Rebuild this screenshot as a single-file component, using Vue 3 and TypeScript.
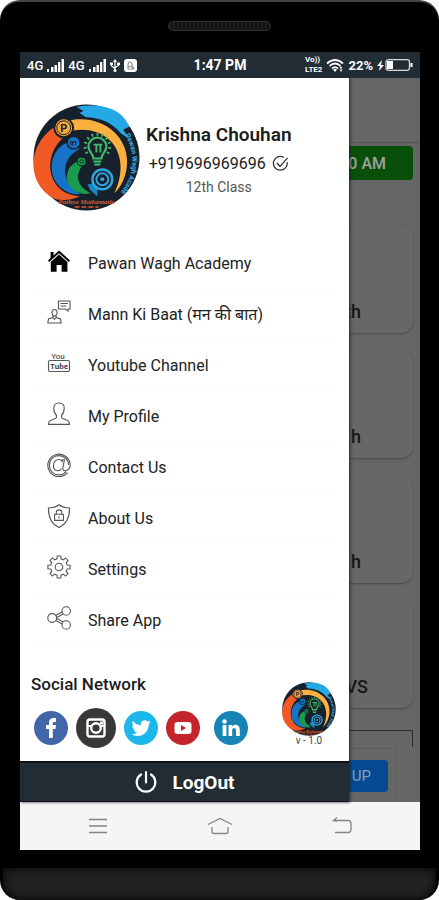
<script setup lang="ts">
interface MenuEntry {
  label: string
  icon: string
  paths: string[]
  solid?: boolean
}

interface PageCard {
  text: string
  wide?: boolean
}

const polar = (r: number, deg: number): string => {
  const a = (deg * Math.PI) / 180
  return `${(12 + r * Math.cos(a)).toFixed(2)} ${(12 + r * Math.sin(a)).toFixed(2)}`
}

const gearPath = (): string => {
  const points: string[] = []
  for (let i = 0; i < 8; i++) {
    const c = i * 45
    points.push(polar(8.4, c - 14), polar(11.2, c - 9), polar(11.2, c + 9), polar(8.4, c + 14))
  }
  return `M${points.join('L')}Z`
}

const raysPath = (): string => {
  const parts: string[] = []
  for (let i = 0; i < 11; i++) {
    const a = ((150 + i * 24) * Math.PI) / 180
    const x = Math.cos(a)
    const y = Math.sin(a)
    parts.push(
      `M${(65 + 11 * x).toFixed(1)} ${(43 + 11 * y).toFixed(1)}L${(65 + 14 * x).toFixed(1)} ${(43 + 14 * y).toFixed(1)}`,
    )
  }
  return parts.join('')
}

const rays = raysPath()

const menu: MenuEntry[] = [
  {
    label: 'Pawan Wagh Academy',
    icon: 'home',
    solid: true,
    paths: [
      'M12 1.5 L23 11.4 L21.8 12.9 L12 4.2 L2.2 12.9 L1 11.4 L3.6 9 V3 H6.6 V6.4 Z',
      'M12 5.6 L20.4 13 V22.8 H14.6 V16 H9.6 V22.8 H3.8 V13 Z',
    ],
  },
  {
    label: 'Mann Ki Baat (मन की बात)',
    icon: 'talk',
    paths: [
      'M11.5 1 H23 V9 H21 V11 L18 9 H11.5 Z',
      'M13.5 3.5 H21 M13.5 6 H19.5',
      'M7.5 9.5 C4.6 9.5 4.6 13 5.4 14.6 C6.2 16.6 8.8 16.6 9.6 14.6 C10.4 13 10.4 9.5 7.5 9.5 Z',
      'M5.8 16 V17.5 L1.5 19 L.8 23 H14.2 L13.5 19 L9.2 17.5 V16',
      'M5.8 17.5 L7.5 19.5 L9.2 17.5',
    ],
  },
  {
    label: 'Youtube Channel',
    icon: 'youtube',
    paths: ['M3 9.5 H21 Q22.5 9.5 22.5 11 V19 Q22.5 20.5 21 20.5 H3 Q1.5 20.5 1.5 19 V11 Q1.5 9.5 3 9.5 Z'],
  },
  {
    label: 'My Profile',
    icon: 'profile',
    paths: [
      'M12 1 C8.2 1 6.6 3.2 6.8 6.4 C6.9 9.4 7.8 11.8 9.4 13.2 V15.6 C8.8 17.4 3 17.4 1.8 20.4 L1.6 22.4 H22.4 L22.2 20.4 C21 17.4 15.2 17.4 14.6 15.6 V13.2 C16.2 11.8 17.1 9.4 17.2 6.4 C17.4 3.2 15.8 1 12 1 Z',
    ],
  },
  {
    label: 'Contact Us',
    icon: 'at',
    paths: [
      'M20.6 19.6 A11.2 11.2 0 1 1 23.2 12 C23.2 15.5 20.9 17.8 18.5 17.8 C16.4 17.8 15.5 16.4 16 14.2 L17.4 6.8 H15.6 L15.2 8.4 C14.3 6.8 12.9 6.3 11.6 6.5 C8.4 6.9 6.5 9.8 6.5 13 C6.5 18.3 12.2 19 14.5 15.6',
      'M19.2 18.6 A9.6 9.6 0 1 1 21.6 12',
    ],
  },
  {
    label: 'About Us',
    icon: 'shield',
    paths: [
      'M12 .8 C9.3 3 5.4 4 1.4 4 C1.4 13 4.2 20 12 23.5 C19.8 20 22.6 13 22.6 4 C18.6 4 14.7 3 12 .8 Z',
      'M7.6 10.2 H16.4 V16.4 H7.6 Z',
      'M9.3 10.2 V8.4 C9.3 5 14.7 5 14.7 8.4 V10.2',
      'M12 12.2 V14.4',
    ],
  },
  {
    label: 'Settings',
    icon: 'gear',
    paths: [gearPath(), 'M15.8 12 A3.8 3.8 0 1 1 8.2 12 A3.8 3.8 0 1 1 15.8 12 Z'],
  },
  {
    label: 'Share App',
    icon: 'share',
    paths: [
      'M9.6 12 A4.4 4.4 0 1 1 .8 12 A4.4 4.4 0 1 1 9.6 12 Z',
      'M23.4 5 A4.2 4.2 0 1 1 15 5 A4.2 4.2 0 1 1 23.4 5 Z',
      'M23.4 19 A4.2 4.2 0 1 1 15 19 A4.2 4.2 0 1 1 23.4 19 Z',
      'M8.6 9.4 L15.2 6 M9.6 11.4 L16.2 8',
      'M8.6 14.6 L15.2 18 M9.6 12.6 L16.2 16',
    ],
  },
]

const cards: PageCard[] = [{ text: 'th' }, { text: 'h' }, { text: 'h' }, { text: 'VS', wide: true }]
</script>

<template>
  <div class="phone">
    <svg class="defs" width="0" height="0" aria-hidden="true">
      <defs>
        <symbol id="academy-logo" viewBox="0 0 108 108">
          <circle cx="54" cy="54" r="53.5" fill="#17212b" />
          <path d="M44 3 C71 -2 91 6 97 23 L91 26 L98 36 L88 29 C80 19 69 14 53 13 L47 9 L51 7 Z" fill="#25a9e6" />
          <path d="M34 17 C68 9 95 31 95 58 C95 72 89 84 82 90 C92 70 90 49 78 37 C66 25 48 24 36 28 Z" fill="#fbb040" />
          <path d="M22 23 C-7 42 -6 80 20 95 C29 99 41 96 47 93 C23 92 12 70 20 49 C24 39 33 30 42 26 Z" fill="#f15a24" />
          <path d="M38 38 C19 42 14 66 24 80 C31 89 41 92 48 91 C32 82 27 64 39 51 L47 45 Z" fill="#1673c8" />
          <path d="M47 57 C33 62 31 76 39 85 C44 90 51 92 58 90 C45 83 42 73 49 63 L54 60 Z" fill="#189b4c" />
          <circle cx="31" cy="24" r="9.5" fill="#f9a63c" stroke="#17212b" stroke-width="2" />
          <circle cx="31" cy="24" r="7" fill="none" stroke="#17212b" stroke-width="1" />
          <text x="31" y="28" text-anchor="middle" font-size="11" font-weight="700" fill="#17212b">P</text>
          <circle cx="41" cy="39" r="6.5" fill="#1673c8" stroke="#17212b" stroke-width="1.5" />
          <path d="M38 42 V38 H43 V42 M40 38 V42" fill="none" stroke="#17212b" stroke-width="1" />
          <circle cx="49" cy="58" r="4.5" fill="#189b4c" stroke="#17212b" stroke-width="1.2" />
          <circle cx="49" cy="58" r="1.8" fill="none" stroke="#17212b" stroke-width="1" />
          <path :d="rays" stroke="#43b96a" stroke-width="1.8" />
          <path d="M61 55 C61 50 56 49 56 43 A9 9 0 0 1 74 43 C74 49 69 50 69 55 Z" fill="none" stroke="#43b96a" stroke-width="2.2" />
          <path d="M61 41 H70 M64 41 V49 M68 41 V49 M61 58 H69 M62 61 H68" fill="none" stroke="#43b96a" stroke-width="2" />
          <path d="M60 75 C60 63 80 63 80 75 C80 86 68 89 65 84 L65 93 L58 87 L55 81 H59 Z" fill="#1988c7" />
          <circle cx="70" cy="76" r="10" fill="#17212b" stroke="#2ca5e0" stroke-width="2.5" />
          <circle cx="70" cy="76" r="6" fill="none" stroke="#2ca5e0" stroke-width="2" />
          <circle cx="70" cy="76" r="2" fill="#2ca5e0" />
          <path id="academy-arc-right" d="M93 31 C104 50 104 74 84 94" fill="none" />
          <text font-size="7" font-weight="700" fill="#38aee8">
            <textPath href="#academy-arc-right">Pawan Wagh Acade</textPath>
          </text>
          <text class="script" x="54" y="101" text-anchor="middle" font-size="7" fill="#e3552d">Pathya Mathematic</text>
          <path d="M42 104 H66" stroke="#e3552d" stroke-width="1.5" stroke-dasharray="5 2" />
        </symbol>
      </defs>
    </svg>

    <div class="bezel-top"><span class="speaker"></span></div>

    <div class="screen">
      <header class="status">
        <div class="status-side">
          <span class="net">4G</span>
          <svg class="bars" viewBox="0 0 17 13" aria-hidden="true"><path d="M0 10h2v3H0zM4 8h2.500v5H4zM7.500 6h2.500v7H7.500zM11 3h2.300v10H11zM14.500 0h2.500v13h-2.500z" fill="#fff" /></svg>
          <span class="net">4G</span>
          <svg class="bars" viewBox="0 0 17 13" aria-hidden="true"><path d="M0 10h2v3H0zM4 8h2.500v5H4zM7.500 6h2.500v7H7.500zM11 3h2.300v10H11zM14.500 0h2.500v13h-2.500z" fill="#fff" /></svg>
          <svg class="usb" viewBox="0 0 10 13" aria-hidden="true"><path d="M5 2V11M1.500 5V7L5 9.500M8.500 5V6.500L5 8.500" fill="none" stroke="#fff" stroke-width="1.200" /><path d="M5 0 7 3H3zM0 3.500h3v2.500H0zM7 3.500h3v2.500H7z" fill="#fff" /><circle cx="5" cy="11.500" r="1.500" fill="#fff" /></svg>
          <svg class="badge" viewBox="0 0 13 13" aria-hidden="true"><rect width="13" height="13" rx="3" fill="#fff" /><path d="M4 10V6.500Q4 3 6 3T8 6L10 10M4 8Q7 6 9.500 10H4" fill="none" stroke="#8b9298" stroke-width="1.200" /></svg>
        </div>
        <span class="clock">1:47 PM</span>
        <div class="status-side status-right">
          <span class="volte"><span>Vo))</span><span>LTE2</span></span>
          <svg class="wifi" viewBox="0 0 18 13" aria-hidden="true"><path d="M1 4.500Q9-2.500 17 4.500M3.500 7Q9 2 14.500 7M6 9.500Q9 6.800 12 9.500" fill="none" stroke="#fff" stroke-width="1.700" /><path d="M7 10.500Q9 9 11 10.500L9 13ZM15 7l1.500 2.500h-3zM15 13l1.500-2.500h-3z" fill="#fff" /></svg>
          <span>22%</span>
          <svg class="battery" viewBox="0 0 36 14" aria-hidden="true"><path d="M5 2 0 8h3l-1 5 5-6H4z" fill="#fff" /><rect x="9" y="1.700" width="23.500" height="10.600" rx="2.500" fill="none" stroke="#d5d9dc" stroke-width="1.300" /><path d="M10 3h6v8h-6zM33.500 5h2v4h-2z" fill="#fff" /></svg>
        </div>
      </header>

      <div class="content">
        <aside class="drawer">
          <section class="profile">
            <svg class="avatar" role="img" aria-label="Pawan Wagh Academy"><use href="#academy-logo" /></svg>
            <div class="who">
              <h1 class="name">Krishna Chouhan</h1>
              <p class="number">
                +919696969696
                <svg class="check" viewBox="0 0 18 18" aria-hidden="true"><path d="M16 7.500A7.300 7.300 0 1 1 12.500 2.500M5 8.500 8.500 12 16.500 3" fill="none" stroke="#333" stroke-width="1.400" /></svg>
              </p>
              <p class="grade">12th Class</p>
            </div>
          </section>

          <nav class="menu">
            <a v-for="item in menu" :key="item.icon" href="#" class="item">
              <svg class="item-icon" viewBox="0 0 24 24" aria-hidden="true">
                <path
                  v-for="(d, i) in item.paths"
                  :key="i"
                  :d="d"
                  :fill="item.solid ? '#000' : 'none'"
                  :stroke="item.solid ? 'none' : '#555'"
                  stroke-width="1.100"
                />
                <template v-if="item.icon === 'youtube'">
                  <text x="11" y="8" text-anchor="middle" font-size="8" font-weight="500" fill="#555">You</text>
                  <text x="12" y="18" text-anchor="middle" font-size="8" font-weight="700" fill="#444">Tube</text>
                </template>
              </svg>
              <span>{{ item.label }}</span>
            </a>
          </nav>

          <section class="social">
            <div>
              <h2 class="social-title">Social Network</h2>
              <div class="social-row">
                <a href="#" class="dot facebook" aria-label="Facebook">
                  <svg viewBox="0 0 34 34"><path d="M15 27V18h-3v-4h3v-2.500C15 8.500 16.800 7 19.500 7H22v4h-1.700c-1.200 0-1.500.6-1.500 1.500V14H22l-.5 4h-2.700v9z" fill="#fff" /></svg>
                </a>
                <a href="#" class="dot instagram" aria-label="Instagram">
                  <svg viewBox="0 0 40 40"><rect x="11.500" y="11.500" width="17" height="17" rx="2.500" fill="none" stroke="#fff" stroke-width="2.400" /><path d="M11 18h5M24 18h5" stroke="#fff" stroke-width="2" /><circle cx="20" cy="20" r="4.800" fill="#383838" stroke="#fff" stroke-width="2.400" /><path d="M24 13.500h3v3h-3z" fill="#fff" /></svg>
                </a>
                <a href="#" class="dot twitter" aria-label="Twitter">
                  <svg viewBox="0 0 34 34"><path transform="translate(7.500 7.500) scale(.8)" d="M23.953 4.570a10 10 0 0 1-2.825.775 4.958 4.958 0 0 0 2.163-2.723 9.990 9.990 0 0 1-3.127 1.184 4.920 4.920 0 0 0-8.384 4.482C7.690 8.095 4.067 6.130 1.640 3.162a4.822 4.822 0 0 0-.666 2.475c0 1.710.87 3.213 2.188 4.096a4.904 4.904 0 0 1-2.228-.616v.06a4.923 4.923 0 0 0 3.946 4.827 4.996 4.996 0 0 1-2.212.085 4.936 4.936 0 0 0 4.604 3.417 9.867 9.867 0 0 1-6.102 2.105c-.39 0-.779-.023-1.170-.067a13.995 13.995 0 0 0 7.557 2.209c9.053 0 13.998-7.496 13.998-13.985 0-.21 0-.42-.015-.63a9.935 9.935 0 0 0 2.460-2.548z" fill="#fff" /></svg>
                </a>
                <a href="#" class="dot youtube" aria-label="YouTube">
                  <svg viewBox="0 0 34 34"><rect x="8.500" y="11" width="17" height="12" rx="3" fill="#fff" /><path d="M15 14v6l5-3z" fill="#c4242b" /></svg>
                </a>
                <a href="#" class="dot linkedin" aria-label="LinkedIn">
                  <svg viewBox="0 0 34 34"><circle cx="10.500" cy="10.500" r="2.200" fill="#fff" /><path d="M8.600 14h3.800v11H8.600zM14.500 14h3.700v1.500c2-3 7.600-2.300 7.600 3V25H22v-5.600c0-3.300-3.800-3-3.800 0V25h-3.700z" fill="#fff" /></svg>
                </a>
              </div>
            </div>
            <div class="version">
              <svg class="mini-logo" aria-hidden="true"><use href="#academy-logo" /></svg>
              <span>v - 1.0</span>
            </div>
          </section>

          <button type="button" class="logout">
            <svg viewBox="0 0 24 24" aria-hidden="true"><path d="M12 2V12.500M7 4.500A9.300 9.300 0 1 0 17 4.500" fill="none" stroke="#fff" stroke-width="2.200" stroke-linecap="round" /></svg>
            LogOut
          </button>
        </aside>

        <main class="page">
          <div class="page-bar"></div>
          <div class="time">0 AM</div>
          <div class="cards">
            <div v-for="(card, i) in cards" :key="i" class="card" :class="{ wide: card.wide }">{{ card.text }}</div>
          </div>
          <div class="frame"></div>
          <div class="signup"><button type="button" class="signup-button">N UP</button></div>
        </main>
      </div>

      <nav class="keys">
        <button type="button" aria-label="Recent apps"><svg viewBox="0 0 26 20"><path d="M4 3.500H22M4 10H22M4 16.500H22" /></svg></button>
        <button type="button" aria-label="Home"><svg viewBox="0 0 26 20"><path d="M1 8.500 13 2.500 25 8.500M5 11V15.500Q5 17.500 7 17.500H19Q21 17.500 21 15.500V11" /></svg></button>
        <button type="button" aria-label="Back"><svg viewBox="0 0 26 20"><path d="M8 1.500 4.500 4.500H19Q22 4.500 22 7.500V13.500Q22 16.500 19 16.500H6M4.500 4.500 8 5.500" /></svg></button>
      </nav>
    </div>

    <div class="bezel-bottom"><div class="chin"></div></div>
  </div>
</template>

<style>
body {
  background: #fff;
}
</style>

<style scoped>
.phone {
  box-sizing: border-box;
  display: flex;
  flex-direction: column;
  min-height: 100vh;
  overflow: hidden;
  background: #000;
  border-top: 2px solid #444;
  border-radius: 20px;
  color: #1c1c1c;
  font-family: Roboto, "Noto Sans", "Liberation Sans", sans-serif;
}
.defs {
  position: absolute;
}
.script {
  font-family: "Liberation Serif", serif;
  font-style: italic;
  font-weight: 700;
}
h1,
h2,
p {
  margin: 0;
}
button {
  border: 0;
  font-family: inherit;
}
.bezel-top {
  display: flex;
  justify-content: center;
  height: 50px;
}
.speaker {
  box-sizing: border-box;
  width: 103px;
  height: 10px;
  margin-top: 19px;
  border: 1px solid #303030;
  border-radius: 5px;
  background: repeating-linear-gradient(90deg, #1e1e1e 0 2px, #111 2px 4px);
}
.screen {
  display: flex;
  flex: 1;
  flex-direction: column;
  margin: 0 19px 0 20px;
}
.status {
  display: flex;
  align-items: center;
  height: 26px;
  padding: 0 7px;
  background: #222c35;
  color: #fff;
  font-size: 13px;
  font-weight: 700;
}
.clock {
  font-size: 14px;
}
.status-side {
  display: flex;
  flex: 1;
  align-items: center;
  gap: 4px;
}
.status-right {
  justify-content: flex-end;
}
.net {
  font-size: 13px;
  font-weight: 500;
}
.bars {
  width: 17px;
  height: 13px;
}
.usb {
  width: 10px;
  height: 13px;
}
.badge {
  width: 13px;
  height: 13px;
}
.volte {
  display: flex;
  flex-direction: column;
  font-size: 8px;
  line-height: 10px;
}
.wifi {
  width: 18px;
  height: 13px;
}
.battery {
  width: 36px;
  height: 14px;
}
.content {
  display: flex;
  flex: 1;
}
.drawer {
  z-index: 1;
  display: flex;
  flex: 1;
  flex-direction: column;
  background: #fff;
  box-shadow: 1px 0 3px #222;
}
.profile {
  display: flex;
  align-items: center;
  gap: 6px;
  padding: 26px 14px 0 13px;
}
.avatar {
  flex: none;
  width: 107px;
  height: 107px;
}
.who {
  display: flex;
  flex-direction: column;
  align-items: center;
}
.name {
  font-size: 19px;
  font-weight: 600;
  line-height: 30px;
  white-space: nowrap;
}
.number {
  display: flex;
  align-items: center;
  gap: 6px;
  font-size: 16px;
  line-height: 28px;
}
.check {
  width: 17px;
  height: 17px;
}
.grade {
  color: #555;
  font-size: 14px;
  line-height: 18px;
}
.menu {
  display: flex;
  flex-direction: column;
  margin: 27px 14px 0;
}
.item {
  box-sizing: border-box;
  display: flex;
  align-items: center;
  gap: 17px;
  height: 51px;
  padding: 0 13px;
  border-bottom: 1px solid #fcfcfc;
  color: #222;
  font-size: 16px;
  text-decoration: none;
  white-space: nowrap;
}
.item-icon {
  flex: none;
  width: 24px;
  height: 24px;
  margin-bottom: 4px;
}
.social {
  display: flex;
  flex: 1;
  align-items: flex-start;
  justify-content: space-between;
  padding: 26px 13px 12px 11px;
}
.social-title {
  font-size: 17px;
  font-weight: 500;
  line-height: 24px;
}
.social-row {
  display: flex;
  align-items: center;
  gap: 8px;
  padding: 12px 3px 0;
}
.dot {
  display: block;
  width: 34px;
  height: 34px;
  border-radius: 50%;
}
.dot svg {
  display: block;
}
.facebook {
  background: #4267a9;
}
.instagram {
  width: 40px;
  height: 40px;
  background: #383838;
}
.twitter {
  background: #1cb7eb;
}
.youtube {
  background: #c4242b;
}
.linkedin {
  margin-left: 6px;
  background: #1684b5;
}
.version {
  display: flex;
  flex-direction: column;
  align-items: center;
  padding-top: 10px;
  color: #444;
  font-size: 10px;
  line-height: 10px;
}
.mini-logo {
  width: 54px;
  height: 54px;
}
.logout {
  display: flex;
  align-items: center;
  justify-content: center;
  gap: 14px;
  height: 41px;
  padding: 0;
  border-top: 2px solid #0c1217;
  border-bottom: 1px solid #12101c;
  background: #222c35;
  color: #fff;
  font-size: 19px;
  font-weight: 700;
}
.logout svg {
  width: 24px;
  height: 24px;
}
.page {
  display: flex;
  flex-direction: column;
  width: 71px;
  overflow: hidden;
  background: #666;
}
.page-bar {
  height: 64px;
  border-bottom: 1px solid #545454;
}
.time {
  display: flex;
  align-items: center;
  justify-content: flex-end;
  height: 34px;
  margin: 3px 7px 0 0;
  padding-right: 27px;
  border-radius: 0 4px 4px 0;
  background: #08500a;
  color: #a0a0a0;
  font-size: 16px;
  font-weight: 500;
  white-space: nowrap;
}
.cards {
  display: flex;
  flex-direction: column;
  gap: 17px;
  padding: 45px 7px 0 0;
}
.card {
  display: flex;
  align-items: flex-end;
  justify-content: flex-end;
  box-sizing: border-box;
  height: 108px;
  padding: 0 52px 10px 0;
  border-radius: 0 12px 12px 0;
  background: #676767;
  box-shadow: 0 1px 2px #4a4a4a;
  color: #161616;
  font-size: 18px;
  font-weight: 500;
  line-height: 22px;
}
.wide {
  padding-right: 45px;
}
.frame {
  height: 16px;
  margin: 22px 7px 0 0;
  border-top: 1px solid #2c2c2c;
  border-right: 1px solid #2c2c2c;
}
.signup {
  flex: 1;
  display: flex;
  align-items: flex-start;
  justify-content: flex-end;
  margin: 1px 23px 0 0;
  padding: 11px 8px 0 0;
  border-top: 1px solid #5c5c5c;
  border-right: 1px solid #5c5c5c;
}
.signup-button {
  flex: none;
  height: 32px;
  padding: 0 17px;
  border-radius: 4px;
  background: #044a93;
  color: #8f9dac;
  font-size: 15px;
  white-space: nowrap;
}
.keys {
  display: flex;
  align-items: center;
  justify-content: space-between;
  height: 48px;
  padding: 0 65px;
  background: #f5f5f5;
}
.keys button {
  padding: 0;
  background: none;
}
.keys svg {
  display: block;
  width: 26px;
  height: 20px;
  fill: none;
  stroke: #858585;
  stroke-width: 1.3;
}
.bezel-bottom {
  display: flex;
  flex-direction: column;
  justify-content: flex-end;
  height: 50px;
}
.chin {
  height: 32px;
  margin: 0 3px;
  border-radius: 0 0 18px 18px;
  background: #222;
  box-shadow: inset 0 0 8px 2px #0a0a0a;
}
</style>
